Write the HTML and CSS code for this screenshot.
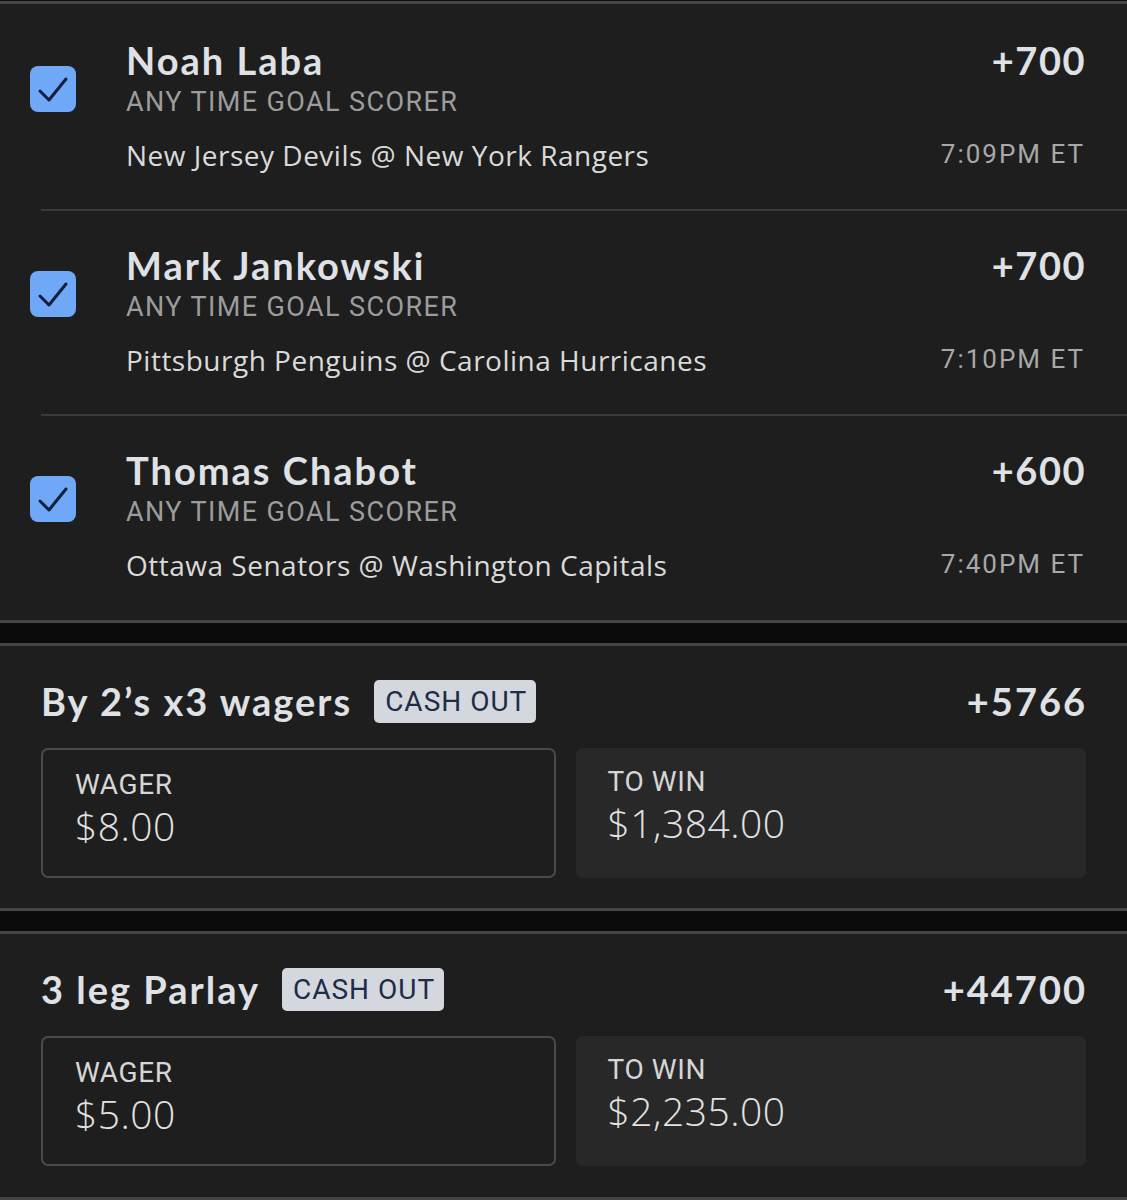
FILE: index.html
```html
<!DOCTYPE html>
<html>
<head>
<meta charset="utf-8">
<link rel="stylesheet" href="styles.css">
</head>
<body>
<section class="panel legs">
  <div class="leg">
    <div class="check"><svg viewBox="0 0 46 46" width="46" height="46"><rect x="0" y="0" width="46" height="46" rx="8" fill="#6fa8f7"/><path d="M10 25 L19 34 L36 13" fill="none" stroke="#0f1f3d" stroke-width="3" stroke-linecap="round" stroke-linejoin="round"/></svg></div>
    <div class="leg-body">
      <div class="line-top"><span class="name">Noah Laba</span><span class="odds">+700</span></div>
      <div class="market">ANY TIME GOAL SCORER</div>
      <div class="line-bottom"><span class="game">New Jersey Devils @ New York Rangers</span><span class="time">7:09PM ET</span></div>
    </div>
  </div>
  <div class="leg">
    <div class="check"><svg viewBox="0 0 46 46" width="46" height="46"><rect x="0" y="0" width="46" height="46" rx="8" fill="#6fa8f7"/><path d="M10 25 L19 34 L36 13" fill="none" stroke="#0f1f3d" stroke-width="3" stroke-linecap="round" stroke-linejoin="round"/></svg></div>
    <div class="leg-body">
      <div class="line-top"><span class="name">Mark Jankowski</span><span class="odds">+700</span></div>
      <div class="market">ANY TIME GOAL SCORER</div>
      <div class="line-bottom"><span class="game">Pittsburgh Penguins @ Carolina Hurricanes</span><span class="time">7:10PM ET</span></div>
    </div>
  </div>
  <div class="leg">
    <div class="check"><svg viewBox="0 0 46 46" width="46" height="46"><rect x="0" y="0" width="46" height="46" rx="8" fill="#6fa8f7"/><path d="M10 25 L19 34 L36 13" fill="none" stroke="#0f1f3d" stroke-width="3" stroke-linecap="round" stroke-linejoin="round"/></svg></div>
    <div class="leg-body">
      <div class="line-top"><span class="name">Thomas Chabot</span><span class="odds">+600</span></div>
      <div class="market">ANY TIME GOAL SCORER</div>
      <div class="line-bottom"><span class="game">Ottawa Senators @ Washington Capitals</span><span class="time">7:40PM ET</span></div>
    </div>
  </div>
</section>

<section class="panel bet">
  <div class="bet-head">
    <span class="bet-title">By 2’s x3 wagers</span>
    <span class="badge">CASH OUT</span>
    <span class="bet-odds">+5766</span>
  </div>
  <div class="boxes">
    <div class="box box-wager"><div class="box-label">WAGER</div><div class="box-amount">$8.00</div></div>
    <div class="box box-win"><div class="box-label">TO WIN</div><div class="box-amount">$1,384.00</div></div>
  </div>
</section>

<section class="panel bet">
  <div class="bet-head">
    <span class="bet-title">3 leg Parlay</span>
    <span class="badge">CASH OUT</span>
    <span class="bet-odds">+44700</span>
  </div>
  <div class="boxes">
    <div class="box box-wager"><div class="box-label">WAGER</div><div class="box-amount">$5.00</div></div>
    <div class="box box-win"><div class="box-label">TO WIN</div><div class="box-amount">$2,235.00</div></div>
  </div>
</section>
</body>
</html>
```

FILE: styles.css
```css
html, body {
  margin: 0;
  padding: 0;
}
body {
  background: #0b0b0c;
  padding-top: 1px;
  font-family: "Lato", "Open Sans", sans-serif;
  color: #dfe1e5;
  width: 1127px;
  height: 1200px;
  overflow: hidden;
}
.panel {
  background: #1e1e1e;
  border-top: 3px solid #454545;
  border-bottom: 3px solid #454545;
}
.panel + .panel {
  margin-top: 20px;
}
.legs {
  padding-left: 41px;
}
.leg {
  display: flex;
  height: 205px;
  box-sizing: border-box;
  padding: 34px 42px 0 0;
}
.leg + .leg {
  border-top: 2px solid #3a3a3a;
}
.leg:last-child {
  height: 206px;
}
.check {
  width: 46px;
  height: 46px;
  margin-left: -11px;
  margin-top: 28px;
  flex: none;
}
.leg + .leg .check {
  margin-top: 26px;
}
.check svg {
  display: block;
}
.leg-body {
  flex: 1;
  margin-left: 50px;
}
.leg + .leg .leg-body {
  margin-top: -2px;
}
.line-top, .line-bottom {
  display: flex;
  justify-content: space-between;
  align-items: baseline;
}
.name, .odds {
  font-weight: 700;
  font-size: 38px;
  line-height: 44px;
  letter-spacing: 2px;
  color: #dfe1e5;
}
.odds {
  letter-spacing: 1.5px;
  margin-right: -1px;
}
.market {
  font-family: "Roboto", sans-serif;
  font-size: 27px;
  line-height: 32px;
  letter-spacing: 1.4px;
  color: #9c9c9c;
  margin-top: 4px;
}
.line-bottom {
  margin-top: 20px;
}
.game {
  font-family: "Open Sans", sans-serif;
  font-size: 28px;
  line-height: 34px;
  letter-spacing: 0.5px;
  color: #dadada;
}
.time {
  font-family: "Roboto", sans-serif;
  font-size: 26px;
  letter-spacing: 2px;
  color: #a8a8a8;
  position: relative;
  top: -3px;
}
.bet {
  padding: 32px 41px 30px 41px;
}
.bet + .bet {
  padding-bottom: 31px;
}
.bet-head {
  display: flex;
  align-items: center;
  height: 46px;
}
.bet-title {
  font-weight: 700;
  font-size: 38px;
  line-height: 46px;
  letter-spacing: 2px;
  color: #dfe1e5;
}
.badge {
  margin-left: 22px;
  background: #d4d8de;
  color: #1e2c48;
  border-radius: 5px;
  font-family: "Roboto", sans-serif;
  font-size: 28px;
  letter-spacing: 1px;
  line-height: 43px;
  padding: 0 9px 0 11px;
}
.bet-odds {
  margin-left: auto;
  font-weight: 700;
  font-size: 38px;
  letter-spacing: 2px;
  margin-right: -1px;
  color: #dfe1e5;
}
.boxes {
  display: flex;
  gap: 20px;
  margin-top: 24px;
}
.box {
  flex: 1;
  height: 130px;
  box-sizing: border-box;
  border-radius: 7px;
  padding: 18px 32px 0;
}
.box-wager {
  border: 2px solid #4a4a4a;
}
.box-win {
  background: #282828;
  padding-top: 17px;
}
.box-label {
  font-family: "Roboto", sans-serif;
  font-size: 28px;
  letter-spacing: 0.6px;
  color: #d6d6d6;
  line-height: 34px;
}
.box-amount {
  font-family: "Open Sans", sans-serif;
  font-weight: 300;
  font-size: 39px;
  line-height: 48px;
  letter-spacing: 0.5px;
  color: #e2e2e2;
}
```
